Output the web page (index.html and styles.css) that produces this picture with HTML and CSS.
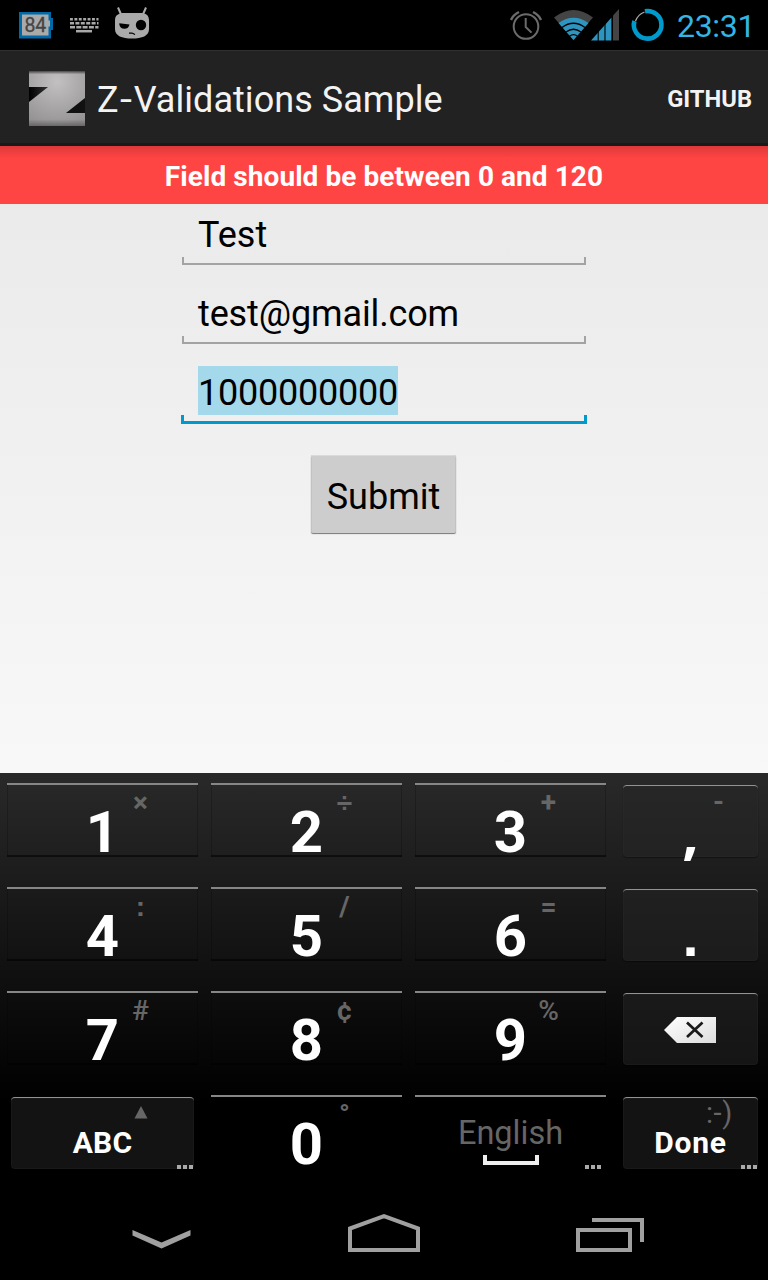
FILE: index.html
```html
<!DOCTYPE html>
<html lang="en">
<head>
<meta charset="utf-8">
<title>Z-Validations Sample</title>
<link rel="stylesheet" href="styles.css">
</head>
<body>
<div class="screen">
  <header class="status">
    <svg class="notifications" width="160" height="50" viewBox="0 0 160 50">
      <path d="M19 12h32v6h2v12h-2v8.500h-32z" fill="#0069a8"/>
      <path d="M22 14.500h26.500v6h1.500v6h-1.500v9h-26.500z" fill="#aaa"/>
      <text x="35.200" y="32" text-anchor="middle" class="battery-text">84</text>
      <g stroke="#a8a8a8" stroke-width="2.500" fill="none">
        <path d="M70 19.200h28.500" stroke-dasharray="2.900 1.500"/>
        <path d="M70 23.200h28.500" stroke-dasharray="4 1.400"/>
        <path d="M70 27.300h28.500" stroke-dasharray="5 1.300"/>
        <path d="M76 31.200h16"/>
      </g>
      <path d="M118 7.500l3.500 8M146 7.500l-3.500 8" stroke="#aaa" stroke-width="2"/>
      <path d="M115 20C115 15 119 13 124 13H140C146 13 149 15 149 21V29C149 36 142 38.500 132 38.500S115 36 115 29z" fill="#aaa"/>
      <path d="M119.300 23.300L129.500 24.500A5.200 5.200 0 0 1 119.300 24.500z" fill="#000"/>
      <circle cx="141" cy="25" r="5.200" fill="#000"/>
      <path d="M129 33.200l3-.2 3 1.500" stroke="#000" stroke-width="1.200" fill="none"/>
    </svg>
    <div class="status-right">
      <svg width="160" height="50" viewBox="508 0 160 50">
        <g fill="none" stroke="#6b6b6b" stroke-width="2">
          <circle cx="526" cy="26.500" r="12.300"/>
          <path d="M525.700 18v9l5.800 5.600"/>
          <path d="M511 20Q513 15 519 12M541 20Q539 15 533 12" stroke-width="2.400"/>
        </g>
        <path d="M554 17.500Q573.500 2.500 593 17.500L573.500 40z" fill="#444"/>
        <path d="M558.500 23Q573.500 12.500 588.500 23L573.500 40z" fill="#2d95bf"/>
        <g fill="none" stroke="#000" stroke-width="1.300"><path d="M562 27.500Q573.500 19 585 27.500M566 32Q573.500 26.500 581 32M569.500 36.200Q573.500 33 577.500 36.200"/></g>
        <path d="M591 40.500L611.500 17.500V40.500z" fill="#2d95bf"/>
        <path d="M613 15.500L619 9V40.500h-6z" fill="#444"/>
        <path d="M598.200 28v13M605 22v19" stroke="#000" stroke-width="1.100"/><path d="M612.300 15v26" stroke="#000"/>
        <path d="M635.500 21Q638 14.500 644.500 12" fill="none" stroke="#aaa" stroke-width="1.300"/>
        <path d="M645 11.300A13.800 13.800 0 1 1 634.400 21" fill="none" stroke="#0099cc" stroke-width="4.600"/>
      </svg>
      <span class="clock">23:31</span>
    </div>
  </header>

  <div class="action-bar">
    <svg class="logo" width="56" height="56" viewBox="0 0 56 56">
      <defs>
        <radialGradient id="metal" cx=".5" cy=".2" r=".85"><stop offset="0" stop-color="#c2c0c0"/><stop offset="1" stop-color="#949192"/></radialGradient>
        <linearGradient id="shade" x1="0" y1="0" x2="0" y2="1"><stop offset="0" stop-opacity=".6"/><stop offset=".06" stop-opacity="0"/><stop offset=".88" stop-opacity="0"/><stop offset="1" stop-opacity=".3"/></linearGradient>
        <linearGradient id="notch"><stop offset="0" stop-color="#000"/><stop offset="1" stop-color="#333"/></linearGradient>
      </defs>
      <path fill="url(#metal)" d="M0 0h56v55H0z"/><path fill="url(#shade)" d="M0 0h56v55H0z"/>
      <path fill="url(#notch)" d="M0 16h19L0 31z"/><path fill="#111" d="M56 27v15H37z"/>
    </svg>
    <h1 class="title">Z<span class="dash">-</span>Validations Sample</h1>
    <span class="menu-item">GITHUB</span>
  </div>

  <main class="content">
    <div class="error"><span>Field should be between 0 and 120</span></div>
    <form class="form">
      <div class="field"><span class="name">Test</span></div>
      <div class="field"><span class="email">test@gmail.com</span></div>
      <div class="field focused"><span class="selected">1000000000</span></div>
      <div class="submit"><span>Submit</span></div>
    </form>
  </main>

  <section class="keyboard">
    <div class="key"><b>1</b><i>×</i></div>
    <div class="key"><b>2</b><i class="square">÷</i></div>
    <div class="key"><b>3</b><i>+</i></div>
    <div class="key side"><b class="comma">,</b><i>-</i></div>
    <div class="key"><b>4</b><i class="square">:</i></div>
    <div class="key"><b>5</b><i>/</i></div>
    <div class="key"><b>6</b><i>=</i></div>
    <div class="key side"><b class="period">.</b></div>
    <div class="key"><b>7</b><i class="light">#</i></div>
    <div class="key"><b>8</b><i>¢</i></div>
    <div class="key"><b>9</b><i class="light">%</i></div>
    <div class="key side icon-key">
      <svg width="54" height="28" viewBox="0 0 54 28"><defs><linearGradient id="del" x2="1" y2="1"><stop offset="0" stop-color="#fff"/><stop offset="1" stop-color="#ddd"/></linearGradient></defs><path fill="url(#del)" d="M0 14L13 1h39v26H13z"/><path d="M23 6.500L38.500 21M38.500 6.500L23 21" stroke="#1a1a1a" stroke-width="2.700"/></svg>
    </div>
    <div class="key side wide"><b class="word">ABC</b><i><svg width="14" height="13" viewBox="0 0 14 13"><path d="M7 0l6.500 12.500H.5z" fill="#666"/></svg></i><u></u></div>
    <div class="key"><b>0</b><i>°</i></div>
    <div class="key space"><span>English</span>
      <svg width="58" height="12" viewBox="0 0 58 12"><path d="M3 1v8h52V1" fill="none" stroke="#eee" stroke-width="4"/></svg><u></u></div>
    <div class="key side"><b class="word done">Done</b><i class="smile">:-)</i><u></u></div>
  </section>

  <nav class="nav">
    <svg width="768" height="96" viewBox="0 1184 768 96" fill="none" stroke="#a0a0a0">
      <path d="M132.500 1230L161.500 1242.500 190.500 1230V1235.500L161.500 1248.500 132.500 1235.500z" fill="#a0a0a0" stroke="none"/>
      <path d="M350 1250V1228.500L384 1216.200 418 1228.500V1250z" stroke-width="4"/>
      <path d="M578 1230h52v20h-52z" stroke-width="4"/><path d="M592 1220h50v22" stroke-width="4"/>
    </svg>
  </nav>
</div>
</body>
</html>
```
FILE: styles.css
```css
* { box-sizing: border-box; }
body { margin: 0; background: #000; font-family: Roboto, "Noto Sans", sans-serif; }
.screen { width: 768px; height: 1280px; display: flex; flex-direction: column; overflow: hidden; }
svg { display: block; flex: none; }

.status { height: 50px; display: flex; justify-content: space-between; background: #000; }
.battery-text { font-size: 19.500px; fill: #444; letter-spacing: -.3px; stroke: #444; stroke-width: .3px; }
.status-right { display: flex; }
.clock { width: 100px; padding-left: 9px; color: #33b5e5; font-size: 32px; letter-spacing: -.3px; line-height: 52px; white-space: nowrap; }

.action-bar { height: 96px; display: flex; align-items: center; padding: 4px 16px 0 29px; background: #222; border-top: 1px solid #303030; border-bottom: 3px solid #191919; }
.title { margin: 2px auto 0 12px; font-size: 36px; font-weight: 400; line-height: 50px; letter-spacing: .05px; color: #f3f3f3; white-space: nowrap; }
.dash { display: inline-block; transform: scaleX(1.2); margin: 0 2.500px; }
.menu-item { font-size: 23.700px; font-weight: 700; color: #f3f3f3; }

.content { height: 627px; background: linear-gradient(#e9e9e9, #f8f8f8); }
.error { height: 58px; display: flex; align-items: center; justify-content: center; padding-top: 3px; background: linear-gradient(#dc393b, #f44 12px); color: #fff; font-size: 28px; font-weight: 700; letter-spacing: .07px; line-height: 60px; white-space: nowrap; }
.form { display: flex; flex-direction: column; align-items: center; color: #000; font-size: 36px; }
.field { width: 404px; height: 61px; margin-bottom: 18px; padding: 7px 16px 0; line-height: 49px; background: linear-gradient(#a3a3a3, #a3a3a3) left bottom / 2px 8px no-repeat, linear-gradient(#a3a3a3, #a3a3a3) right bottom / 2px 8px no-repeat, linear-gradient(#a3a3a3, #a3a3a3) left bottom / 100% 2px no-repeat; }
.field span { display: block; width: max-content; }
.email { letter-spacing: -.13px; }
.focused { width: 406px; height: 62px; padding: 4px 17px 0; background: linear-gradient(#09c, #09c) left bottom / 3px 9px no-repeat, linear-gradient(#09c, #09c) right bottom / 3px 9px no-repeat, linear-gradient(#09c, #09c) left bottom / 100% 3px no-repeat; }
.selected { height: 49px; line-height: 55px; background: #a4d8eb; letter-spacing: -.22px; }
.submit { width: 145px; height: 78px; margin: 13px 1px 0 0; display: flex; justify-content: center; background: #cdcdcd; border-radius: 2px; line-height: 84px; box-shadow: inset 0 1px #dadada, inset 1px 0 #c2c2c2, inset -1px 0 #c2c2c2, 0 1px 1px #777; }

.keyboard { height: 411px; padding: 10px 10px 0 7px; display: grid; grid-template-columns: 191px 191px 191px 139px; grid-auto-rows: 74px; gap: 30px 13px; background: linear-gradient(#292929, #000 330px); }
.key { position: relative; display: flex; justify-content: center; padding-top: 19px; border: 0 solid #868686; border-top-width: 2px; box-shadow: inset 1px 0 rgba(0,0,0,.2), inset -1px 0 rgba(0,0,0,.2), inset 0 -2px rgba(0,0,0,.55); }
.key b { margin-top: -2px; color: #fff; font-size: 58px; line-height: 60px; height: 60px; }
.key i { position: absolute; left: calc(50% + 8px); width: 60px; top: 3px; text-align: center; color: #666; font-size: 28px; font-weight: 700; font-style: normal; line-height: 30px; }
.key .light { font-weight: 500; }
.key .square, .key .period { font-family: "Liberation Sans", sans-serif; }
.key .comma { font-family: "Open Sans", sans-serif; }
.side { margin: 2px 0 0 4px; height: 72px; padding-top: 18px; border-color: #929292; border-top-width: 1px; border-radius: 4px; background: rgba(38,38,38,.5); box-shadow: inset 0 0 0 1px rgba(50,50,50,.2), 0 1px 1px rgba(0,0,0,.4); }
.side i { left: calc(50% - 2px); top: 1px; }
.key .word { font-size: 30px; line-height: 36px; height: 36px; padding-top: 11px; letter-spacing: .2px; }
.key .done { letter-spacing: .8px; }
.icon-key { padding: 22px 0 0 0; }
.wide { width: 183px; }
.wide i { left: calc(50% + 8px); top: 8px; }
.wide i svg { margin: 0 auto; }
.key .smile { left: calc(50% - 1px); top: 0; font-size: 29px; font-weight: 400; letter-spacing: .7px; }
.space { flex-direction: column; justify-content: flex-start; align-items: center; padding-top: 17px; box-shadow: none; color: #666; font-size: 32.500px; line-height: 38px; }
.space svg { margin-top: 2px; }
.key u { position: absolute; right: 1px; bottom: 0; width: 16px; height: 4px; background: repeating-linear-gradient(90deg, #aaa 0 4px, transparent 4px 6px); }
.space u { right: 5px; }
.nav { height: 96px; background: #000; }
```
